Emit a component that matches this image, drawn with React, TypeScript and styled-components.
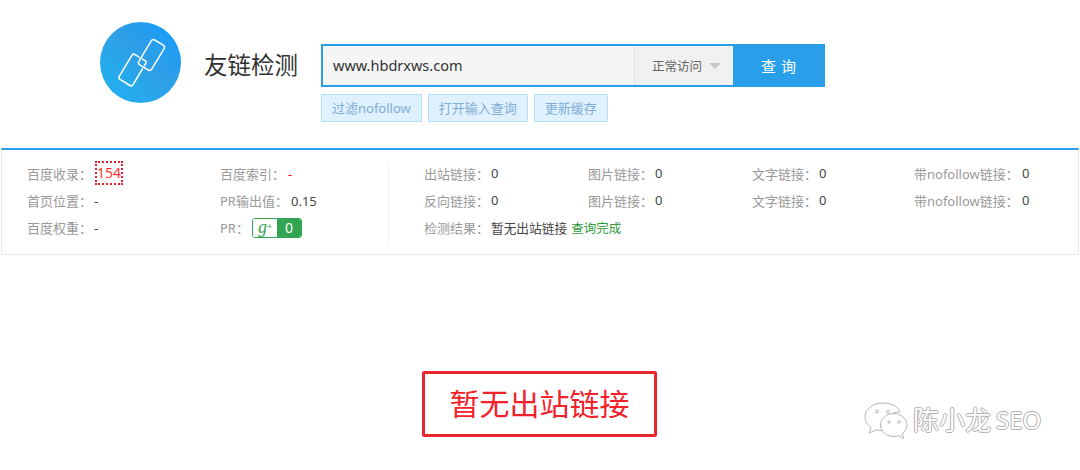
import styled, { createGlobalStyle } from 'styled-components'

const GlobalStyle = createGlobalStyle`
  html, body {
    margin: 0;
    padding: 0;
    background: #fff;
  }
  body {
    font-family: "Noto Sans", "Noto Sans CJK SC", sans-serif;
  }
`

const Page = styled.div`
  position: relative;
  width: 1080px;
  height: 470px;
  overflow: hidden;
`

const Header = styled.header`
  display: flex;
  align-items: flex-start;
  padding: 22px 0 0 100px;
  height: 148px;
  box-sizing: border-box;
`

const LogoCircle = styled.div`
  width: 81px;
  height: 81px;
  border-radius: 50%;
  background: linear-gradient(45deg, #1cb4f2 0%, #2f9fe6 55%, #129cff 100%);
  flex: none;
`

const Title = styled.h1`
  margin: 25px 0 0 23px;
  width: 117px;
  font-size: 23.5px;
  line-height: 36px;
  font-weight: 400;
  color: #333;
  white-space: nowrap;
`

const SearchColumn = styled.div`
  display: flex;
  flex-direction: column;
  gap: 7px;
  padding-top: 22px;
`

const SearchBox = styled.div`
  display: flex;
  width: 504px;
  height: 43px;
  box-sizing: border-box;
  border: 2px solid #2a9fe9;
`

const UrlText = styled.div`
  width: 311px;
  padding-left: 10px;
  box-sizing: border-box;
  background: #f5f5f5;
  font-size: 14.5px;
  line-height: 39px;
  color: #333;
`

const Select = styled.div`
  display: flex;
  align-items: center;
  width: 99px;
  box-sizing: border-box;
  padding-left: 17px;
  background: #f1f1f1;
  border-left: 1px solid #e0e0e0;
  font-size: 12.5px;
  color: #666;
`

const Caret = styled.span`
  margin-left: 7px;
  border-left: 6px solid transparent;
  border-right: 6px solid transparent;
  border-top: 6px solid #c8c8c8;
`

const QueryButton = styled.button`
  flex: 1;
  border: 0;
  padding: 0 0 0 6px;
  background: #2a9fe9;
  color: #fff;
  font-family: inherit;
  font-size: 15px;
  letter-spacing: 5px;
`

const ActionRow = styled.div`
  display: flex;
  gap: 6px;
`

const ActionButton = styled.div`
  height: 28px;
  box-sizing: border-box;
  padding: 0 10px;
  border: 1px solid #b5e0fb;
  background: #dff1ff;
  color: #7eaed6;
  font-size: 13px;
  line-height: 26px;
  white-space: nowrap;
`

const Panel = styled.section`
  display: flex;
  margin: 0 1px;
  height: 107px;
  box-sizing: border-box;
  border-top: 2px solid #2a9fe9;
  border-left: 1px solid #e8e8e8;
  border-right: 1px solid #e8e8e8;
  border-bottom: 1px solid #e8e8e8;
`

const LeftStats = styled.div`
  display: grid;
  grid-template-columns: 193px 168px;
  grid-auto-rows: 27px;
  width: 386px;
  box-sizing: border-box;
  padding: 10px 0 0 25px;
`

const RightStats = styled.div`
  display: grid;
  grid-template-columns: 164px 164px 162px 1fr;
  grid-auto-rows: 20px;
  row-gap: 7px;
  flex: 1;
  height: 82px;
  margin-top: 13px;
  padding-left: 35px;
  border-left: 1px dotted #e4e4e4;
`

const Stat = styled.div<{ $wide?: boolean }>`
  display: flex;
  align-items: center;
  white-space: nowrap;
  ${(p) => p.$wide && 'grid-column: 1 / -1;'}
`

const Label = styled.span<{ $width?: number }>`
  width: ${(p) => p.$width ?? 71}px;
  flex: none;
  color: #999;
  font-size: 13px;
`

const Value = styled.span`
  color: #444;
  font-size: 13px;
`

const Dash = styled(Value)<{ $red?: boolean }>`
  color: ${(p) => (p.$red ? '#f00' : '#444')};
`

const ResultText = styled(Value)`
  font-size: 12.7px;
`

const Done = styled.span`
  margin-left: 4px;
  color: #2f9a3a;
  font-size: 12.5px;
`

const Indexed = styled.span`
  width: 28px;
  height: 24px;
  box-sizing: border-box;
  margin: -1px 0 0 -3px;
  border: 2px dotted #e8202a;
  color: #f33;
  font-size: 14px;
  line-height: 20px;
  text-align: center;
`

const PrBadge = styled.span`
  display: flex;
  width: 50px;
  height: 20px;
  box-sizing: border-box;
  margin-left: -2px;
  border: 1px solid #33a552;
  border-radius: 3px;
  overflow: hidden;
`

const BadgeG = styled.span`
  width: 24px;
  background: #fff;
  color: #33a552;
  font-family: "Liberation Serif", serif;
  font-style: italic;
  font-size: 18px;
  line-height: 16px;
  text-align: center;

  sup {
    font-size: 9px;
    font-weight: 700;
    font-style: normal;
    vertical-align: 4px;
    line-height: 0;
  }
`

const BadgeNum = styled.span`
  flex: 1;
  background: #33a552;
  color: #fff;
  font-size: 14px;
  line-height: 18px;
  text-align: center;
`

const Notice = styled.div`
  width: 235px;
  height: 66px;
  box-sizing: border-box;
  margin: 116px 0 0 422px;
  border: 3px solid #e8262e;
  border-radius: 2px;
  color: #f3222a;
  font-size: 30px;
  line-height: 60px;
  text-align: center;
`

const Watermark = styled.div`
  position: absolute;
  left: 862px;
  top: 401px;
  display: flex;
  align-items: center;
  gap: 3px;
  color: #fff;
  font-size: 26px;
  line-height: 38px;
  text-shadow: -1px 0 0 #b0b0b0, 1px 0 0 #b0b0b0, 0 -1px 0 #b0b0b0, 0 1px 0 #b0b0b0;
`

const WatermarkLatin = styled.span`
  font-size: 24px;
  margin-left: 2px;
`

const leftStats = [
  ['百度收录：', <Indexed key="i">154</Indexed>, 71],
  ['百度索引：', <Dash key="d" $red>-</Dash>, 68],
  ['首页位置：', <Dash key="d">-</Dash>, 67],
  ['PR输出值：', <Value key="v">0.15</Value>, 71],
  ['百度权重：', <Dash key="d">-</Dash>, 67],
  ['PR：', <PrBadge key="b"><BadgeG>g<sup>+</sup></BadgeG><BadgeNum>0</BadgeNum></PrBadge>, 34],
] as const

const linkStats = [
  ['出站链接：', '图片链接：', '文字链接：', '带nofollow链接：'],
  ['反向链接：', '图片链接：', '文字链接：', '带nofollow链接：'],
]

function LinkIcon() {
  return (
    <svg width="81" height="81" viewBox="0 0 81 81" fill="none" stroke="#fff" strokeWidth="1.5" strokeLinejoin="round" strokeLinecap="round">
      <rect x="44" y="18.500" width="15" height="29" rx="2.500" transform="rotate(31 51.500 33)" />
      <path d="M39.100 35.100 L35 32.600 Q33.100 31.450 32 33.200 L19.300 54.400 Q18.200 56.300 20 57.400 L30 63.500 Q31.900 64.550 33 62.700 L42.400 47" />
      <path d="M42.500 37.100 L45 38.600 Q46.800 39.700 45.800 41.500 L44.500 43.600" />
    </svg>
  )
}

function WeChatIcon() {
  return (
    <svg width="48" height="38" viewBox="0 0 48 38" fill="#fff" stroke="#b5b5b5" strokeWidth="1">
      <path d="M21 2C10 2 3 8.500 3 16c0 4.400 2.500 8 6 10.500L7.500 32l6.500-3.200c2 .6 4 .9 6 .9 1 0 2 0 3-.2-.6-1.500-1-3.200-1-5 0-8 7.500-13.500 16-13.500C36.500 5.500 29 2 21 2z" />
      <path d="M45 24c0-6.500-6.500-11.500-13-11.500-7.500 0-13.500 5-13.500 11.500S24.500 35.500 32 35.500c1.500 0 3-.2 4.500-.7l5 2.700-1.300-4.700C43 30.800 45 27.600 45 24z" />
      <circle cx="15" cy="10.500" r="1.500" />
      <circle cx="26" cy="10.500" r="1.500" />
      <circle cx="27" cy="21" r="1.200" />
      <circle cx="37" cy="21" r="1.200" />
    </svg>
  )
}

export default function App() {
  return (
    <Page>
      <GlobalStyle />
      <Header>
        <LogoCircle>
          <LinkIcon />
        </LogoCircle>
        <Title>友链检测</Title>
        <SearchColumn>
          <SearchBox>
            <UrlText>www.hbdrxws.com</UrlText>
            <Select>
              正常访问
              <Caret />
            </Select>
            <QueryButton>查询</QueryButton>
          </SearchBox>
          <ActionRow>
            <ActionButton>过滤nofollow</ActionButton>
            <ActionButton>打开输入查询</ActionButton>
            <ActionButton>更新缓存</ActionButton>
          </ActionRow>
        </SearchColumn>
      </Header>
      <Panel>
        <LeftStats>
          {leftStats.map(([label, value, width]) => (
            <Stat key={label}>
              <Label $width={width}>{label}</Label>
              {value}
            </Stat>
          ))}
        </LeftStats>
        <RightStats>
          {linkStats.flat().map((label, i) => (
            <Stat key={i}>
              <Label $width={label.length > 5 ? 108 : 67}>{label}</Label>
              <Value>0</Value>
            </Stat>
          ))}
          <Stat $wide>
            <Label $width={67}>检测结果：</Label>
            <ResultText>暂无出站链接</ResultText>
            <Done>查询完成</Done>
          </Stat>
        </RightStats>
      </Panel>
      <Notice>暂无出站链接</Notice>
      <Watermark>
        <WeChatIcon />
        陈小龙<WatermarkLatin>SEO</WatermarkLatin>
      </Watermark>
    </Page>
  )
}
